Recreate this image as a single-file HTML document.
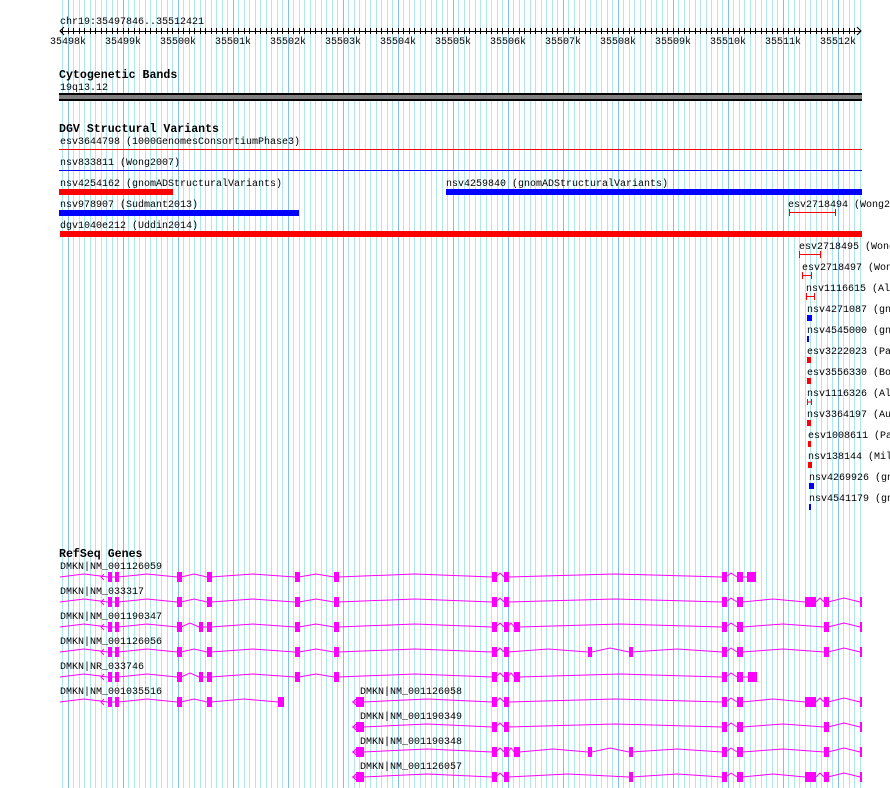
<!DOCTYPE html>
<html><head><meta charset="utf-8"><style>
html,body{margin:0;padding:0;background:#fff;width:890px;height:788px;overflow:hidden}
svg{display:block}
text{font-family:"Liberation Mono",monospace;font-size:10px;fill:#000}
.b{font-weight:bold;font-size:11.6px}
.ex rect{fill:#ff00ff}
.in{fill:none;stroke:#ff00ff;stroke-width:1}
</style></head><body>
<svg width="890" height="788" viewBox="0 0 890 788" xmlns="http://www.w3.org/2000/svg" shape-rendering="crispEdges">
<defs>
<pattern id="g" x="68" y="0" width="55" height="10" patternUnits="userSpaceOnUse">
<rect x="0" y="0" width="1" height="10" fill="#80c0ee"/>
<rect x="5" y="0" width="1" height="10" fill="#ade8ee"/>
<rect x="11" y="0" width="1" height="10" fill="#ade8ee"/>
<rect x="16" y="0" width="1" height="10" fill="#ade8ee"/>
<rect x="22" y="0" width="1" height="10" fill="#ade8ee"/>
<rect x="27" y="0" width="1" height="10" fill="#ade8ee"/>
<rect x="33" y="0" width="1" height="10" fill="#ade8ee"/>
<rect x="38" y="0" width="1" height="10" fill="#ade8ee"/>
<rect x="44" y="0" width="1" height="10" fill="#ade8ee"/>
<rect x="49" y="0" width="1" height="10" fill="#ade8ee"/>
</pattern>
<pattern id="t" x="68" y="0" width="55" height="10" patternUnits="userSpaceOnUse">
<rect x="0" y="0" width="1" height="10" fill="#000"/>
<rect x="5" y="0" width="1" height="10" fill="#000"/>
<rect x="11" y="0" width="1" height="10" fill="#000"/>
<rect x="16" y="0" width="1" height="10" fill="#000"/>
<rect x="22" y="0" width="1" height="10" fill="#000"/>
<rect x="27" y="0" width="1" height="10" fill="#000"/>
<rect x="33" y="0" width="1" height="10" fill="#000"/>
<rect x="38" y="0" width="1" height="10" fill="#000"/>
<rect x="44" y="0" width="1" height="10" fill="#000"/>
<rect x="49" y="0" width="1" height="10" fill="#000"/>
</pattern>
</defs>
<rect x="58" y="0" width="803" height="788" fill="url(#g)"/>

<!-- ruler -->
<text x="60" y="24">chr19:35497846..35512421</text>
<rect x="60" y="31" width="801" height="1" fill="#000"/>
<rect x="62" y="28" width="797" height="6" fill="url(#t)"/>
<path d="M64,27 L60,31 L64,35 M857,27 L861,31 L857,35" stroke="#000" fill="none" shape-rendering="auto"/>
<g text-anchor="middle">
<text x="68" y="44">35498k</text><text x="123" y="44">35499k</text><text x="178" y="44">35500k</text>
<text x="233" y="44">35501k</text><text x="288" y="44">35502k</text><text x="343" y="44">35503k</text>
<text x="398" y="44">35504k</text><text x="453" y="44">35505k</text><text x="508" y="44">35506k</text>
<text x="563" y="44">35507k</text><text x="618" y="44">35508k</text><text x="673" y="44">35509k</text>
<text x="728" y="44">35510k</text><text x="783" y="44">35511k</text><text x="838" y="44">35512k</text>
</g>

<!-- cytobands -->
<text class="b" x="59" y="78">Cytogenetic Bands</text>
<text x="60" y="90">19q13.12</text>
<rect x="59" y="93" width="803" height="8" fill="#000"/>
<rect x="59" y="95" width="803" height="4" fill="#808080"/>

<!-- DGV -->
<text class="b" x="59" y="132">DGV Structural Variants</text>
<text x="60" y="144">esv3644798 (1000GenomesConsortiumPhase3)</text>
<rect x="59" y="149" width="803" height="1" fill="#ff0000"/>
<text x="60" y="165">nsv833811 (Wong2007)</text>
<rect x="59" y="170" width="803" height="1" fill="#0000ff"/>
<text x="60" y="186">nsv4254162 (gnomADStructuralVariants)</text>
<rect x="59" y="189" width="114" height="6" fill="#ff0000"/>
<text x="446" y="186">nsv4259840 (gnomADStructuralVariants)</text>
<rect x="446" y="189" width="416" height="6" fill="#0000ff"/>
<text x="60" y="207">nsv978907 (Sudmant2013)</text>
<rect x="59" y="210" width="240" height="6" fill="#0000ff"/>
<text x="788" y="207">esv2718494 (Wong2007)</text>
<path d="M789.5,209 V216 M789,212.5 H836 M835.5,209 V216" stroke="#ff0000" fill="none"/>
<text x="60" y="228">dgv1040e212 (Uddin2014)</text>
<rect x="60" y="231" width="802" height="6" fill="#ff0000"/>

<text x="799" y="249">esv2718495 (Wong2007)</text>
<path d="M799.5,251 V258 M799,254.5 H821 M820.5,251 V258" stroke="#ff0000" fill="none"/>
<text x="802" y="270">esv2718497 (Wong2007)</text>
<path d="M802.5,272 V279 M802,275.5 H812 M811.5,272 V279" stroke="#ff0000" fill="none"/>
<text x="806" y="291">nsv1116615 (Alkan2009)</text>
<path d="M806.5,293 V300 M806,296.5 H815 M814.5,293 V300" stroke="#ff0000" fill="none"/>
<text x="807" y="312">nsv4271087 (gnomAD)</text>
<rect x="807" y="315" width="5" height="6" fill="#0000ff"/>
<text x="807" y="333">nsv4545000 (gnomAD)</text>
<rect x="807" y="336" width="2" height="6" fill="#0000ff"/>
<text x="807" y="354">esv3222023 (Pang)</text>
<rect x="807" y="357" width="4" height="6" fill="#ff0000"/>
<text x="807" y="375">esv3556330 (Boomsma)</text>
<rect x="807" y="378" width="4" height="6" fill="#ff0000"/>
<text x="807" y="396">nsv1116326 (Alkan)</text>
<path d="M807.5,399 V405 M807,402 H812 M811.5,399 V405" stroke="#ff0000" fill="none"/>
<text x="807" y="417">nsv3364197 (Auton)</text>
<rect x="807" y="420" width="4" height="6" fill="#ff0000"/>
<text x="808" y="438">esv1008611 (Pang)</text>
<rect x="808" y="441" width="3" height="6" fill="#ff0000"/>
<text x="808" y="459">nsv138144 (Mills)</text>
<rect x="808" y="462" width="4" height="6" fill="#ff0000"/>
<text x="809" y="480">nsv4269926 (gnomAD)</text>
<rect x="809" y="483" width="5" height="6" fill="#0000ff"/>
<text x="809" y="501">nsv4541179 (gnomAD)</text>
<rect x="809" y="504" width="2" height="6" fill="#0000ff"/>

<!-- RefSeq -->
<text class="b" x="59" y="557">RefSeq Genes</text>
<text x="60" y="569">DMKN|NM_001126059</text>
<text x="60" y="594">DMKN|NM_033317</text>
<text x="60" y="619">DMKN|NM_001190347</text>
<text x="60" y="644">DMKN|NM_001126056</text>
<text x="60" y="669">DMKN|NR_033746</text>
<text x="60" y="694">DMKN|NM_001035516</text>
<text x="360" y="694">DMKN|NM_001126058</text>
<text x="360" y="719">DMKN|NM_001190349</text>
<text x="360" y="744">DMKN|NM_001190348</text>
<text x="360" y="769">DMKN|NM_001126057</text>

<g class="in" shape-rendering="auto">
<!-- R1 y577 -->
<path d="M60,577 L84,574 L108,577 M111,577 L115,577 M118,577 L147,574 L177,577 M181,577 L194,574 L207,577 M211,577 L253,574 L295,577 M299,577 L316,574 L334,577 M338,577 L415,574 L492,577 M496,577 L500,573 L504,577 M508,577 L615,574 L722,577 M726,577 L731,573 L737,577 M742,577 L747,577 M104,574 L101,577 L104,580"/>
<!-- R2 y602 -->
<path d="M60,602 L84,599 L108,602 M111,602 L115,602 M118,602 L147,599 L177,602 M181,602 L194,599 L207,602 M211,602 L253,599 L295,602 M299,602 L316,599 L334,602 M338,602 L415,599 L492,602 M496,602 L500,598 L504,602 M508,602 L615,599 L722,602 M726,602 L731,598 L737,602 M742,602 L773,599 L805,602 M816,602 L820,598 L824,602 M828,602 L844,598 L860,602 M104,599 L101,602 L104,605"/>
<!-- R3 y627 -->
<path d="M60,627 L84,624 L108,627 M111,627 L115,627 M118,627 L147,624 L177,627 M181,627 L190,623 L199,627 M202,627 L207,627 M211,627 L253,624 L295,627 M299,627 L316,624 L334,627 M338,627 L415,624 L492,627 M496,627 L500,623 L504,627 M508,627 L511,623 L514,627 M519,627 L620,624 L722,627 M726,627 L731,623 L737,627 M742,627 L783,624 L824,627 M828,627 L844,623 L860,627 M104,624 L101,627 L104,630"/>
<!-- R4 y652 -->
<path d="M60,652 L84,649 L108,652 M111,652 L115,652 M118,652 L147,649 L177,652 M181,652 L194,649 L207,652 M211,652 L253,649 L295,652 M299,652 L316,649 L334,652 M338,652 L415,649 L492,652 M496,652 L500,648 L504,652 M508,652 L548,649 L588,652 M592,652 L610,648 L629,652 M632,652 L677,649 L722,652 M726,652 L731,648 L737,652 M742,652 L783,649 L824,652 M828,652 L844,648 L860,652 M104,649 L101,652 L104,655"/>
<!-- R5 y677 -->
<path d="M60,677 L84,674 L108,677 M111,677 L115,677 M118,677 L147,674 L177,677 M181,677 L190,673 L199,677 M202,677 L207,677 M211,677 L253,674 L295,677 M299,677 L316,674 L334,677 M338,677 L415,674 L492,677 M496,677 L500,673 L504,677 M508,677 L511,673 L514,677 M519,677 L620,674 L722,677 M726,677 L731,673 L737,677 M742,677 L748,677 M104,674 L101,677 L104,680"/>
<!-- R6 y702 -->
<path d="M60,702 L84,699 L108,702 M111,702 L115,702 M118,702 L147,699 L177,702 M181,702 L194,699 L207,702 M211,702 L244,699 L278,702 M104,699 L101,702 L104,705"/>
<path d="M352,702 L356,702 M363,702 L427,699 L492,702 M496,702 L500,698 L504,702 M508,702 L615,699 L722,702 M726,702 L731,698 L737,702 M742,702 L773,699 L805,702 M816,702 L820,698 L824,702 M828,702 L844,698 L860,702 M356,699 L353,702 L356,705"/>
<!-- R7 y727 -->
<path d="M352,727 L356,727 M363,727 L427,724 L492,727 M496,727 L500,723 L504,727 M508,727 L615,724 L722,727 M726,727 L731,723 L737,727 M742,727 L783,724 L824,727 M828,727 L844,723 L860,727 M356,724 L353,727 L356,730"/>
<!-- R8 y752 -->
<path d="M352,752 L356,752 M363,752 L427,749 L492,752 M496,752 L500,748 L504,752 M508,752 L511,748 L514,752 M519,752 L553,749 L588,752 M592,752 L610,748 L629,752 M632,752 L677,749 L722,752 M726,752 L731,748 L737,752 M742,752 L783,749 L824,752 M828,752 L844,748 L860,752 M356,749 L353,752 L356,755"/>
<!-- R9 y777 -->
<path d="M352,777 L356,777 M363,777 L427,774 L492,777 M496,777 L500,773 L504,777 M508,777 L568,774 L629,777 M632,777 L677,774 L722,777 M726,777 L731,773 L737,777 M742,777 L773,774 L805,777 M816,777 L820,773 L824,777 M828,777 L844,773 L860,777 M356,774 L353,777 L356,780"/>
</g>

<g class="ex">
<!-- R1 -->
<rect x="108" y="572" width="4" height="10"/><rect x="115" y="572" width="4" height="10"/><rect x="177" y="572" width="5" height="10"/><rect x="207" y="572" width="5" height="10"/><rect x="295" y="572" width="5" height="10"/><rect x="334" y="572" width="5" height="10"/><rect x="492" y="572" width="5" height="10"/><rect x="504" y="572" width="5" height="10"/><rect x="722" y="572" width="5" height="10"/><rect x="737" y="572" width="6" height="10"/><rect x="747" y="572" width="9" height="10"/>
<!-- R2 -->
<rect x="108" y="597" width="4" height="10"/><rect x="115" y="597" width="4" height="10"/><rect x="177" y="597" width="5" height="10"/><rect x="207" y="597" width="5" height="10"/><rect x="295" y="597" width="5" height="10"/><rect x="334" y="597" width="5" height="10"/><rect x="492" y="597" width="5" height="10"/><rect x="504" y="597" width="5" height="10"/><rect x="722" y="597" width="5" height="10"/><rect x="737" y="597" width="6" height="10"/><rect x="805" y="597" width="11" height="10"/><rect x="824" y="597" width="5" height="10"/><rect x="860" y="597" width="2" height="10"/>
<!-- R3 -->
<rect x="108" y="622" width="4" height="10"/><rect x="115" y="622" width="4" height="10"/><rect x="177" y="622" width="5" height="10"/><rect x="199" y="622" width="4" height="10"/><rect x="207" y="622" width="5" height="10"/><rect x="295" y="622" width="5" height="10"/><rect x="334" y="622" width="5" height="10"/><rect x="492" y="622" width="5" height="10"/><rect x="504" y="622" width="5" height="10"/><rect x="514" y="622" width="6" height="10"/><rect x="722" y="622" width="5" height="10"/><rect x="737" y="622" width="6" height="10"/><rect x="824" y="622" width="5" height="10"/><rect x="860" y="622" width="2" height="10"/>
<!-- R4 -->
<rect x="108" y="647" width="4" height="10"/><rect x="115" y="647" width="4" height="10"/><rect x="177" y="647" width="5" height="10"/><rect x="207" y="647" width="5" height="10"/><rect x="295" y="647" width="5" height="10"/><rect x="334" y="647" width="5" height="10"/><rect x="492" y="647" width="5" height="10"/><rect x="504" y="647" width="5" height="10"/><rect x="588" y="647" width="4" height="10"/><rect x="629" y="647" width="4" height="10"/><rect x="722" y="647" width="5" height="10"/><rect x="737" y="647" width="6" height="10"/><rect x="824" y="647" width="5" height="10"/><rect x="860" y="647" width="2" height="10"/>
<!-- R5 -->
<rect x="108" y="672" width="4" height="10"/><rect x="115" y="672" width="4" height="10"/><rect x="177" y="672" width="5" height="10"/><rect x="199" y="672" width="4" height="10"/><rect x="207" y="672" width="5" height="10"/><rect x="295" y="672" width="5" height="10"/><rect x="334" y="672" width="5" height="10"/><rect x="492" y="672" width="5" height="10"/><rect x="504" y="672" width="5" height="10"/><rect x="514" y="672" width="6" height="10"/><rect x="722" y="672" width="5" height="10"/><rect x="737" y="672" width="6" height="10"/><rect x="748" y="672" width="9" height="10"/>
<!-- R6 -->
<rect x="108" y="697" width="4" height="10"/><rect x="115" y="697" width="4" height="10"/><rect x="177" y="697" width="5" height="10"/><rect x="207" y="697" width="5" height="10"/><rect x="278" y="697" width="6" height="10"/>
<rect x="356" y="697" width="8" height="10"/><rect x="492" y="697" width="5" height="10"/><rect x="504" y="697" width="5" height="10"/><rect x="722" y="697" width="5" height="10"/><rect x="737" y="697" width="6" height="10"/><rect x="805" y="697" width="11" height="10"/><rect x="824" y="697" width="5" height="10"/><rect x="860" y="697" width="2" height="10"/>
<!-- R7 -->
<rect x="356" y="722" width="8" height="10"/><rect x="492" y="722" width="5" height="10"/><rect x="504" y="722" width="5" height="10"/><rect x="722" y="722" width="5" height="10"/><rect x="737" y="722" width="6" height="10"/><rect x="824" y="722" width="5" height="10"/><rect x="860" y="722" width="2" height="10"/>
<!-- R8 -->
<rect x="356" y="747" width="8" height="10"/><rect x="492" y="747" width="5" height="10"/><rect x="504" y="747" width="5" height="10"/><rect x="514" y="747" width="6" height="10"/><rect x="588" y="747" width="4" height="10"/><rect x="629" y="747" width="4" height="10"/><rect x="722" y="747" width="5" height="10"/><rect x="737" y="747" width="6" height="10"/><rect x="824" y="747" width="5" height="10"/><rect x="860" y="747" width="2" height="10"/>
<!-- R9 -->
<rect x="356" y="772" width="8" height="10"/><rect x="492" y="772" width="5" height="10"/><rect x="504" y="772" width="5" height="10"/><rect x="629" y="772" width="4" height="10"/><rect x="722" y="772" width="5" height="10"/><rect x="737" y="772" width="6" height="10"/><rect x="805" y="772" width="11" height="10"/><rect x="824" y="772" width="5" height="10"/><rect x="860" y="772" width="2" height="10"/>
</g>
</svg>
</body></html>
